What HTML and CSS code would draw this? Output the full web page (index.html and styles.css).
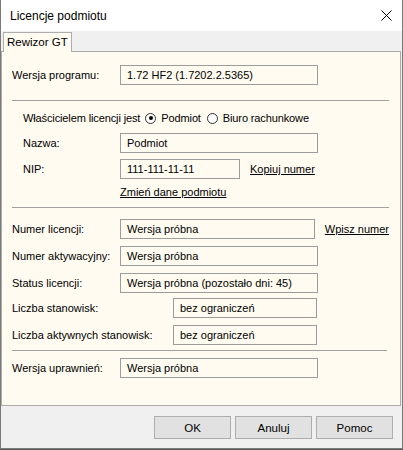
FILE: index.html
```html
<!DOCTYPE html>
<html lang="pl">
<head>
<meta charset="utf-8">
<title>Licencje podmiotu</title>
<link rel="stylesheet" href="styles.css">
</head>
<body>
<div class="window">
  <div class="titlebar">
    <span class="title">Licencje podmiotu</span>
    <svg class="close" width="11" height="11" viewBox="0 0 11 11"><path d="M0.5 0.5 L10.5 10.5 M10.5 0.5 L0.5 10.5" stroke="#000" stroke-width="1" fill="none"/></svg>
  </div>
  <div class="tabstrip">
    <div class="tab">Rewizor GT</div>
  </div>
  <div class="panel">
    <div class="row">
      <span class="lbl">Wersja programu:</span>
      <span class="field w-std">1.72 HF2 (1.7202.2.5365)</span>
    </div>
    <div class="sep sep-1"></div>
    <div class="row indent gap-radio tight">
      <span>Właścicielem licencji jest</span>
      <span class="radio r1"><span class="circle on"></span><span class="rtext">Podmiot</span></span>
      <span class="radio r2"><span class="circle"></span><span class="rtext">Biuro rachunkowe</span></span>
    </div>
    <div class="row indent gap-5">
      <span class="lbl lbl-in">Nazwa:</span>
      <span class="field w-std">Podmiot</span>
    </div>
    <div class="row indent gap-6">
      <span class="lbl lbl-in">NIP:</span>
      <span class="field w-nip">111-111-11-11</span>
      <a class="link after-field">Kopiuj numer</a>
    </div>
    <div class="row indent gap-3">
      <span class="lbl lbl-in"></span>
      <a class="link">Zmień dane podmiotu</a>
    </div>
    <div class="sep gap-5"></div>
    <div class="row gap-11">
      <span class="lbl">Numer licencji:</span>
      <span class="field w-std">Wersja próbna</span>
      <a class="link after-field">Wpisz numer</a>
    </div>
    <div class="row gap-7">
      <span class="lbl">Numer aktywacyjny:</span>
      <span class="field w-std">Wersja próbna</span>
    </div>
    <div class="row gap-7">
      <span class="lbl">Status licencji:</span>
      <span class="field w-std">Wersja próbna (pozostało dni: 45)</span>
    </div>
    <div class="row gap-5">
      <span class="lbl lbl-wide">Liczba stanowisk:</span>
      <span class="field w-short">bez ograniczeń</span>
    </div>
    <div class="row gap-7">
      <span class="lbl lbl-wide">Liczba aktywnych stanowisk:</span>
      <span class="field w-short">bez ograniczeń</span>
    </div>
    <div class="sep gap-5 sep-short"></div>
    <div class="row gap-7">
      <span class="lbl">Wersja uprawnień:</span>
      <span class="field w-std">Wersja próbna</span>
    </div>
  </div>
  <div class="buttons">
    <button class="btn">OK</button>
    <button class="btn">Anuluj</button>
    <button class="btn">Pomoc</button>
  </div>
</div>
</body>
</html>
```
FILE: styles.css
```css
html, body {
  margin: 0;
  padding: 0;
  background: #5a5a5a;
}
body {
  font-family: "Liberation Sans", Arial, sans-serif;
  font-size: 11px;
  color: #000;
}
.window {
  width: 403px;
  height: 449px;
  box-sizing: border-box;
  border-left: 1px solid #7a7a7a;
  border-right: 1px solid #7a7a7a;
  border-bottom: 1px solid #7a7a7a;
  background: #f0f0f0;
  display: flex;
  flex-direction: column;
}
.titlebar {
  height: 31px;
  background: #fff;
  display: flex;
  align-items: center;
  padding-left: 9px;
  flex-shrink: 0;
}
.title {
  font-size: 12px;
}
.close {
  margin-left: auto;
  margin-right: 10px;
}
.tabstrip {
  height: 20px;
  display: flex;
  align-items: flex-end;
  flex-shrink: 0;
}
.tab {
  margin-left: 2px;
  width: 64px;
  height: 19px;
  line-height: 19px;
  padding-left: 3px;
  box-sizing: content-box;
  border: 1px solid #adadad;
  border-bottom: none;
  background: #fffbf0;
  position: relative;
  z-index: 1;
  margin-bottom: -1px;
  font-size: 11.5px;
}
.panel {
  height: 355px;
  box-sizing: border-box;
  margin-right: 1px;
  border: 1px solid #adadad;
  background: #fffbf0;
  padding: 13px 11px 0 10px;
  display: flex;
  flex-direction: column;
  flex-shrink: 0;
}
.row {
  display: flex;
  align-items: center;
  height: 20px;
  flex-shrink: 0;
  white-space: nowrap;
}
.tight {
  letter-spacing: -0.12px;
}
.indent {
  padding-left: 11px;
}
.lbl {
  width: 108px;
  flex-shrink: 0;
}
.lbl-in {
  width: 97px;
}
.lbl-wide {
  width: 161px;
}
.field {
  height: 20px;
  box-sizing: border-box;
  border: 1px solid #9c9c9c;
  background: #fffbf0;
  padding-left: 6px;
  line-height: 18px;
  overflow: hidden;
}
.w-std { width: 198px; }
.w-nip { width: 120px; }
.w-short { width: 144px; }
.link {
  text-decoration: underline;
  color: #000;
}
.after-field {
  margin-left: 10px;
}
.sep {
  height: 1px;
  background: #a0a0a0;
  flex-shrink: 0;
}
.sep-1 { margin-top: 15px; }
.sep-short { margin-right: 2px; }
.gap-radio { margin-top: 7px; }
.gap-3 { margin-top: 3px; }
.gap-5 { margin-top: 5px; }
.gap-6 { margin-top: 6px; }
.gap-7 { margin-top: 7px; }
.gap-11 { margin-top: 11px; }
.radio {
  display: inline-flex;
  align-items: center;
}
.r1 { margin-left: 5px; }
.r2 { margin-left: 6px; }
.circle {
  width: 11px;
  height: 11px;
  box-sizing: border-box;
  border: 1.5px solid #333;
  border-radius: 50%;
  background: #fff;
  display: inline-flex;
  align-items: center;
  justify-content: center;
}
.circle.on::after {
  content: "";
  width: 4px;
  height: 4px;
  border-radius: 50%;
  background: #000;
}
.rtext {
  margin-left: 5px;
}
.r2 .rtext { margin-left: 5px; }
.buttons {
  display: flex;
  justify-content: flex-end;
  gap: 4px;
  padding: 10px 9px 0 0;
}
.btn {
  width: 77px;
  height: 23px;
  box-sizing: border-box;
  border: 1px solid #adadad;
  background: #e1e1e1;
  font-family: "Liberation Sans", Arial, sans-serif;
  font-size: 11.5px;
  color: #000;
  padding: 0;
}
```
